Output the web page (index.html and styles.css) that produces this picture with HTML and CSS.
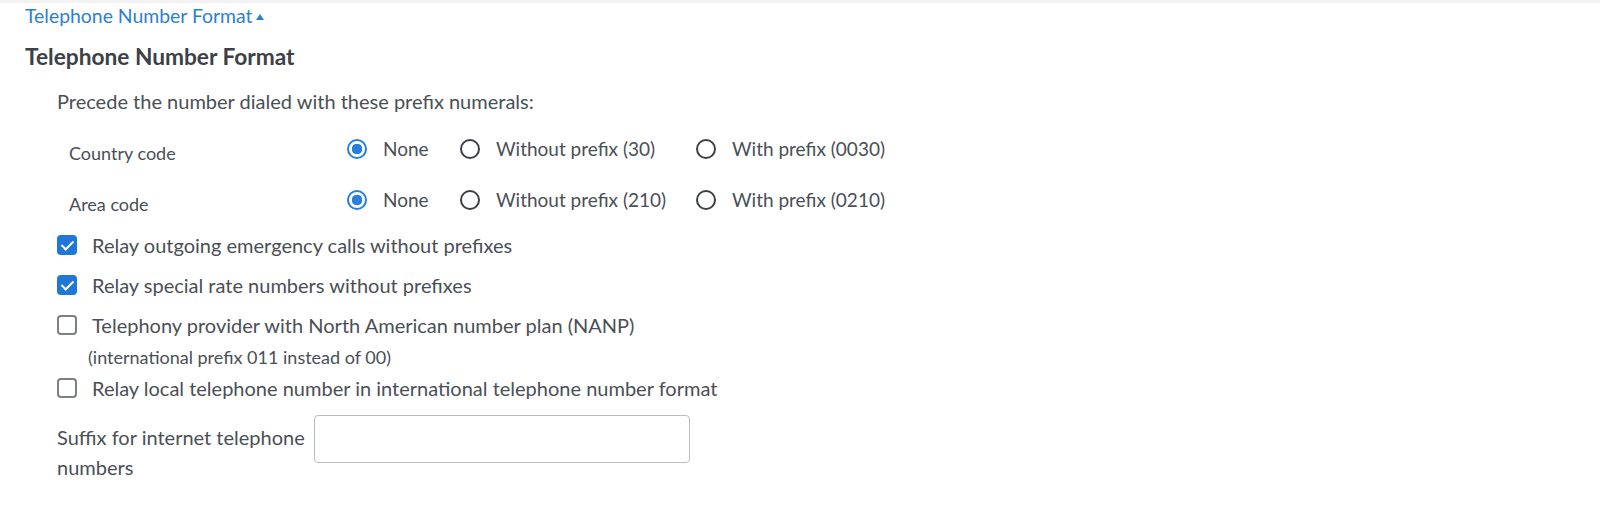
FILE: index.html
```html
<!DOCTYPE html>
<html lang="en">
<head>
  <meta charset="UTF-8" />
  <title>Telephone Number Format</title>
  <link rel="stylesheet" href="styles.css">
</head>
<body>
  <div class="topbar"></div>
  <a class="toggle" href="#">Telephone Number Format<span class="caret"></span></a>
  <h2>Telephone Number Format</h2>

  <div class="section">
    <p class="intro">Precede the number dialed with these prefix numerals:</p>

    <div class="prefix-grid">
      <span class="row-label">Country code</span>
      <label class="radio"><input type="radio" name="cc" checked><span class="dot"></span>None</label>
      <label class="radio"><input type="radio" name="cc"><span class="dot"></span>Without prefix (30)</label>
      <label class="radio"><input type="radio" name="cc"><span class="dot"></span>With prefix (0030)</label>

      <span class="row-label">Area code</span>
      <label class="radio"><input type="radio" name="ac" checked><span class="dot"></span>None</label>
      <label class="radio"><input type="radio" name="ac"><span class="dot"></span>Without prefix (210)</label>
      <label class="radio"><input type="radio" name="ac"><span class="dot"></span>With prefix (0210)</label>
    </div>

    <label class="check"><input type="checkbox" checked><span class="box"></span>Relay outgoing emergency calls without prefixes</label>
    <label class="check"><input type="checkbox" checked><span class="box"></span>Relay special rate numbers without prefixes</label>
    <label class="check"><input type="checkbox"><span class="box"></span>Telephony provider with North American number plan (NANP)</label>
    <p class="hint">(international prefix 011 instead of 00)</p>
    <label class="check"><input type="checkbox"><span class="box"></span>Relay local telephone number in international telephone number format</label>

    <div class="suffix">
      <label for="suffix">Suffix for internet telephone numbers</label>
      <input id="suffix" type="text" />
    </div>
  </div>
</body>
</html>
```

FILE: styles.css
```css
body {
  margin: 0;
  font-family: Lato, "Open Sans", sans-serif;
  font-size: 20px;
  color: #4a4f56;
  background: #fff;
}
.topbar {
  height: 3px;
  background: #f3f3f4;
}
.toggle {
  display: inline-block;
  margin: 2px 0 0 25px;
  color: #2d7fd2;
  font-size: 19.4px;
  line-height: 22px;
  text-decoration: none;
}
.caret {
  display: inline-block;
  margin-left: 3px;
  vertical-align: 3px;
  border-left: 4px solid transparent;
  border-right: 4px solid transparent;
  border-bottom: 6px solid #2d7fd2;
}
h2 {
  margin: 17px 0 0 25px;
  font-size: 22.7px;
  line-height: 26px;
  font-weight: bold;
  color: #3d4147;
}
.section {
  padding-left: 57px;
}
.intro {
  margin: 18px 0 0;
  line-height: 26px;
}
.prefix-grid {
  display: grid;
  grid-template-columns: 278px 113px 236px auto;
  grid-auto-rows: 51px;
  align-items: center;
  margin: 9px 0 0 12px;
  width: 840px;
  font-size: 19px;
}
.row-label {
  padding-top: 8px;
  font-size: 18px;
}
.radio,
.check {
  display: flex;
  align-items: center;
  cursor: pointer;
}
.radio input,
.check input {
  display: none;
}
.dot {
  width: 20px;
  height: 20px;
  box-sizing: border-box;
  border: 2px solid #3c4046;
  border-radius: 50%;
  margin-right: 16px;
  flex: none;
}
.radio input:checked + .dot {
  border-color: #2680de;
  background: radial-gradient(circle, #2680de 0 5px, #fff 5.5px);
}
.check {
  height: 40px;
}
.box {
  width: 20px;
  height: 20px;
  box-sizing: border-box;
  border: 2px solid #7c8086;
  border-radius: 4px;
  margin-right: 15px;
  flex: none;
  position: relative;
}
.check input:checked + .box {
  background: #1f77d8;
  border-color: #1f77d8;
}
.check input:checked + .box::after {
  content: "";
  position: absolute;
  left: 5px;
  top: 1px;
  width: 5px;
  height: 10px;
  border: solid #fff;
  border-width: 0 2.5px 2.5px 0;
  transform: rotate(45deg);
}
.hint {
  margin: -1px 0 -2px 31px;
  line-height: 26px;
  font-size: 18px;
}
.suffix {
  display: flex;
  align-items: flex-start;
  margin-top: 7px;
}
.suffix label {
  width: 250px;
  line-height: 30px;
  margin-top: 7px;
}
.suffix input {
  width: 376px;
  height: 48px;
  box-sizing: border-box;
  margin-left: 7px;
  border: 1px solid #b9bcc0;
  border-radius: 4px;
  font: inherit;
  padding: 0 12px;
}
```
